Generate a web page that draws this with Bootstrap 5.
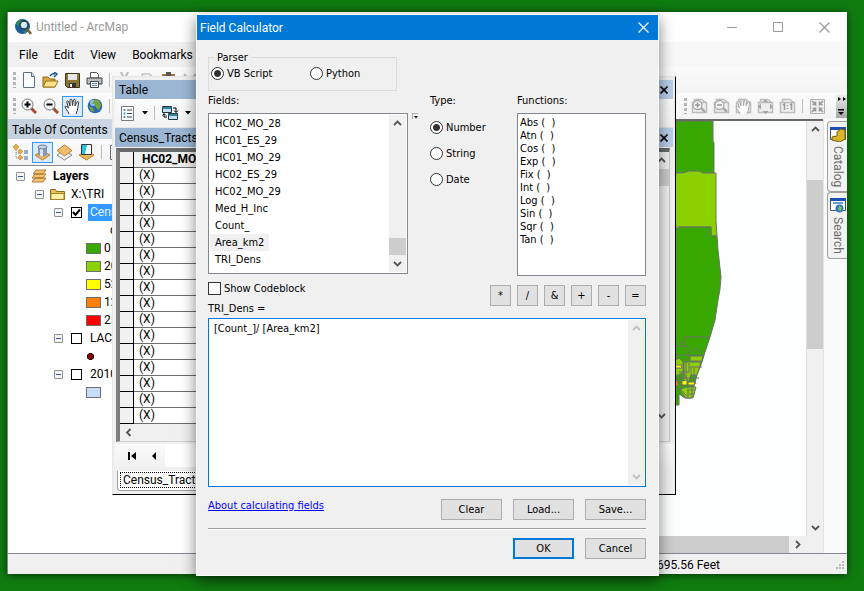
<!DOCTYPE html>
<html lang="en">
<head>
<meta charset="utf-8">
<meta name="viewport" content="width=device-width, initial-scale=1">
<title>Untitled - ArcMap</title>
<link href="https://cdn.jsdelivr.net/npm/bootstrap@5.3.0/dist/css/bootstrap.min.css" rel="stylesheet">
<style>
:root{--face:#f0f0f0;--blue:#0078d7;--caption:#99b4d1}
body{background:#107c10;font:12px/16px Roboto,"Open Sans",sans-serif;color:#000;min-height:100vh;overflow:hidden}
svg{display:block;flex:none}
button{font:inherit;color:inherit}
.win{position:absolute;display:flex;flex-direction:column}
.win-main{inset:12px 17px 17px 7px;background:#fff;border-left:1px solid #7b8a7b;box-shadow:0 1px 8px rgba(0,0,0,.6)}
.plain{background:none;border:0;padding:0;display:flex;align-items:center;justify-content:center}
.titlebar{height:30px;padding:0 0 0 6px;color:#999}
.capbtn{width:46px;height:30px;color:#999}
.menus{height:25px;padding:0 0 0 11px;gap:16px;background:linear-gradient(90deg,#f0f0f0 20%,#f8f8f8 80%)}
.menus a{color:#000;text-decoration:none}
.tools{height:26px;background:#f8f8f8}
.strip{height:26px;gap:1px;padding-left:2px;background:linear-gradient(#fbfbfb,#f3f3f3)}
.tool{width:21px;height:21px;border:1px solid transparent}
.tool.on{border-color:#3399ff;background:#dcebfa}
.grip{width:3px;height:16px;margin:0 1px 0 3px;background:repeating-linear-gradient(#b4b4b4 0 3px,transparent 3px 5px)}
.vsep{width:1px;height:14px;margin:0 3px;background:#bcbcbc}
.more{width:11px;height:24px;background:linear-gradient(#f0f0f0,#a8a8a8);margin-left:7px}
.toc{width:260px;flex:none}
.toc-head{height:20px;padding:3px 4px 1px;background:linear-gradient(90deg,#c3d0de,#d8e2ee)}
.toc-tree{border-top:1px solid #828790;padding:1px 0 0 8px;overflow:hidden}
.trow{height:18px;gap:6px;white-space:nowrap}
.lvl2{padding-left:19px}.lvl3{padding-left:38px}.lvl4{padding-left:70px;gap:3px}
.trow label{padding-left:2px}
.exp{width:9px;height:9px;border:1px solid #919191;border-radius:1px;background:linear-gradient(#3b57a0,#3b57a0) center/5px 1px no-repeat #f4f4f4}
.sw{width:15px;height:11px;border:1px solid #6e6e6e}
.sw0{background:#38a800}.sw1{background:#8bd100}.sw2{background:#ff0}.sw3{background:#ff8000}.sw4{background:#f00}.sw5{background:#c5ddf8}
.tick{appearance:none;width:11px;height:11px;margin:0 0 0 2px;border:1px solid #000;background:#fff}
.tick:checked{background:#fff url("data:image/svg+xml,%3Csvg xmlns='http://www.w3.org/2000/svg' viewBox='0 0 9 9'%3E%3Cpath d='M1 4l2.5 3L8 1.5' fill='none' stroke='%23000' stroke-width='2'/%3E%3C/svg%3E")}
.picked{background:#39f;color:#e6f6ff;height:17px;padding:0 2px}
.mapview{border-top:2px solid #696969;background:#fdfefe}
.sbar{width:17px;background:#f0f0f0;border-left:1px solid #e0e0e0;flex:none;color:#555}
.hbar{height:17px;background:#f0f0f0;flex:none;color:#555}
.knob{background:#cdcdcd}
.mapknob{margin:46px 0 174px}
.tknob,.fknob{height:17px}
.dock{width:24px;background:#fbfbfb;border-left:1px solid #e3e3e3;padding:2px 0 0 3px;flex:none}
.docktab{width:20px;height:71px;padding:4px 0 0;gap:4px;border:1px solid #a0a0a0;border-right:0;border-radius:4px 0 0 4px;background:#f3f3f3;color:#6d6d6d;flex-direction:column;justify-content:flex-start}
.docktab+.docktab{height:67px}
.docktab span{writing-mode:vertical-rl}
.status{height:21px;background:var(--face);border-top:1px solid #828790;padding:2px 2px 0 0}
.coords{margin-right:116px}
.win-table{inset:76px 188px 96px 112px;background:var(--face);border:solid;border-width:1px;border-color:#e8e8e8 #000 #000 #e8e8e8;padding:3px 2px 3px 2px}
.cap{height:19px;padding:0 5px 0 4px;background:var(--caption)}
.tcap{background:linear-gradient(90deg,#99b4d1,#b7cfeb)}
.cap2{height:20px;border-top:1px solid #e4e4e4}
.ttools{height:28px}
.dd{margin:0 5px 0 3px}
.gridbox{margin:1px 3px 0 1px;border:3px solid #696969;border-width:4px 1px 1px 4px;border-color:#696969 #c8c8c8 #d0d0d0 #7c7c7c;background:#fff;overflow:hidden}
.recs{width:100%;table-layout:fixed;border-collapse:separate;border-spacing:0}
.recs th,.recs td{height:16px;padding:0 0 0 5px;border-bottom:1px solid #6e6e6e;line-height:15px;background:#fff}
.recs thead th{background:var(--face);padding-left:8px}
.recs th:first-child{width:14px;padding:0;background:var(--face);border:solid #000;border-width:0 1px 1px 0}
.recnav{height:23px;margin-top:2px;padding-left:6px;background:linear-gradient(#fbfbfb,#f1f1f1)}
.recnav .plain{width:22px;height:20px}
.sheet{align-self:flex-start;margin:4px 0 0 2px;border:1px solid #a0a0a0;border-top:0;border-radius:0 0 3px 3px;background:#fff;padding:1px 2px 2px}
.sheet span{display:block;border:1px dotted #000;padding:0 2px;line-height:14px}
.win-dlg{inset:14px 205px 15px 196px;background:var(--face);border:1px solid #fafafa;box-shadow:0 5px 14px rgba(0,0,0,.5);font:11px/13px "DejaVu Sans Condensed","Noto Sans",sans-serif}
.dlg-title{height:25px;padding:0 9px 0 3px;background:var(--blue);color:#fff;font:12px/16px Roboto,sans-serif}
.dlg-body{padding:11px 12px 16px 11px}
.parser{width:189px;height:40px;border:1px solid #dcdcdc;padding:0 2px;margin:0}
.parser legend{float:none;width:auto;margin:0 0 0 3px;padding:0 3px;font-size:11px;line-height:13px;background:var(--face)}
.parser .d-flex{padding-top:3px}
.opt{display:flex;align-items:center;gap:3px}
.opt input{appearance:none;width:13px;height:13px;margin:0;border:1px solid #333;background:#fff;flex:none}
.opt input[type=radio]{border-radius:50%}
.opt input[type=radio]:checked{background:radial-gradient(circle,#333 0 3px,#fff 4px)}
.vb{width:99px}
.upper{padding-top:3px}
.lab{height:19px;line-height:14px}
.lbox{border:1px solid #828790;background:#fff}
.fieldlist{width:200px;height:161px;padding:1px}
.fieldlist li{height:17px;line-height:17px;padding:0 5px;width:max-content}
.fieldlist li.cur{background:var(--face)}
.funclist{height:163px;padding:2px}
.funclist li{line-height:13px;height:13px}
.mini{width:6px;height:6px;border:1px solid #aaa;border-width:1px 0 0 1px;margin:19px 0 0 4px}
.types{width:87px;margin-left:12px}
.gap-list{gap:13px;padding-top:8px}
.opsrow{height:29px;padding-top:6px}
.ops{gap:6px;padding-top:3px}
.exprlab{height:16px;margin-top:-3px}
.btn-w{border:1px solid #adadad;background:#e1e1e1;height:21px;padding:0}
.wide{width:61px}.op{width:21px;font-size:11px}
.main-btn{border:2px solid var(--blue)}
.expr{height:169px;border:1px solid var(--blue);background:#fff;padding:1px}
.expr textarea{border:0;outline:0;resize:none;background:transparent;padding:2px 4px;font:inherit;line-height:13px;overflow:hidden}
.expr .sbar{width:16px;border:0;color:#c0c0c0}
.actions{gap:11px}
.expr+.actions{padding-top:12px}
.rule{height:2px;margin:8px 0;border-top:1px solid #a0a0a0;background:#fff}
.help{color:#00f}
</style>
</head>
<body>
<svg width="0" height="0" class="position-absolute" aria-hidden="true">
<symbol id="up" viewBox="0 0 9 9"><path d="M1 6l3.500-3.500L8 6" fill="none" stroke="currentColor" stroke-width="1.800"/></symbol>
<symbol id="down" viewBox="0 0 9 9"><path d="M1 3l3.500 3.500L8 3" fill="none" stroke="currentColor" stroke-width="1.800"/></symbol>
<symbol id="left" viewBox="0 0 9 9"><path d="M6.500 1L3 4.500 6.500 8" fill="none" stroke="currentColor" stroke-width="1.800"/></symbol>
<symbol id="right" viewBox="0 0 9 9"><path d="M3 1l3.500 3.500L3 8" fill="none" stroke="currentColor" stroke-width="1.800"/></symbol>
<symbol id="x" viewBox="0 0 11 11"><path d="M.5.5l10 10M10.500.5l-10 10" fill="none" stroke="currentColor" stroke-width="1.200"/></symbol>
<symbol id="xb" viewBox="0 0 8 8"><path d="M.5.5l7 7M7.500.5l-7 7" fill="none" stroke="currentColor" stroke-width="1.700"/></symbol>
<symbol id="hand" viewBox="0 0 17 17"><path d="M5 16C4 13 1 10 1 8.500 2 7.500 3 9 4.500 10L2.800 4C2.700 2.600 4.200 2.500 4.700 4L6 8 6 2.200C6 .8 7.700.8 8 2.200L8.500 7.500 9.500 2C10 .8 11.300 1 11.300 2.400L11 8 13 4C13.800 3 15 3.600 14.600 5 14 7 14 12 12 16" fill="#fff" stroke="currentColor"/></symbol>
<symbol id="page" viewBox="0 0 17 17"><path d="M1.500 4.500h14v10h-14zM11 1.500H3.500v3M11 1.500l3.500 3" fill="#eee" stroke="#bdbdbd" stroke-width="1.500"/></symbol>
</svg>

<main class="win win-main">
  <header class="titlebar d-flex align-items-center">
    <svg width="18" height="18" viewBox="0 0 18 18"><circle cx="8.500" cy="8.500" r="7.500" fill="#1d5c9c"/><path d="M2 5Q5 0 9 2L6 5 4 9zM9 13l4-1-2 4z" fill="#2e8b57"/><circle cx="10" cy="7" r="4" fill="#bfe6f5" stroke="#20343f" stroke-width="1.300"/><path d="M8 5h4M8 7h3" stroke="#fff"/><path d="M13 11l4 5" stroke="#7d5c34" stroke-width="2.500"/></svg>
    <span class="flex-grow-1 ms-1">Untitled - ArcMap</span>
    <button class="plain capbtn" aria-label="Minimize"><svg width="10" height="11"><path d="M0 5.500h10" stroke="currentColor"/></svg></button>
    <button class="plain capbtn" aria-label="Maximize"><svg width="10" height="10"><path d="M.5.5h9v9h-9z" fill="none" stroke="currentColor"/></svg></button>
    <button class="plain capbtn" aria-label="Close"><svg width="11" height="11"><use href="#x"/></svg></button>
  </header>
  <nav class="menus d-flex align-items-center"><a href="#">File</a><a href="#">Edit</a><a href="#">View</a><a href="#">Bookmarks</a></nav>
  <div class="tools">
    <div class="strip d-flex align-items-center">
      <i class="grip"></i>
      <button class="plain tool" aria-label="New"><svg width="14" height="16"><path d="M1.500.5h8l3 4v11h-11z" fill="#fafdff" stroke="#5d6f80"/><path d="M9.500.5v4h3" fill="#c9dcec" stroke="#5d6f80"/></svg></button>
      <button class="plain tool" aria-label="Open"><svg width="17" height="16"><path d="M1 5h5l2 2h5v8H1z" fill="#d9a936" stroke="#8d6a17"/><path d="M4 9h12l-3 6H1z" fill="#ffe28a" stroke="#96721c"/><path d="M8 4q2-3 5-2M12 0l3 2-3 3" stroke="#17549b" fill="none" stroke-width="1.500"/></svg></button>
      <button class="plain tool" aria-label="Save"><svg width="15" height="15"><path d="M.5.5h14v14h-12l-2-2z" fill="#8c7433" stroke="#3f3517"/><path d="M3 1h9v6H3z" fill="#e5e5e5"/><path d="M4 10h7v4H4z" fill="#333"/><path d="M5 11h2v3H5z" fill="#eee"/></svg></button>
      <button class="plain tool" aria-label="Print"><svg width="17" height="16"><path d="M4.500 6V.5h6l2 2V6z" fill="#fff" stroke="#555"/><path d="M1 6h15v6H1z" fill="#b8bec2" stroke="#444"/><path d="M4.500 9.500h8v6h-8z" fill="#fff" stroke="#444"/><path d="M6 11.500h5M6 13.500h5" stroke="#5084b4"/></svg></button>
      <i class="vsep"></i>
      <button class="plain tool" aria-label="Cut"><svg width="15" height="16"><path d="M4 0l5 10M11 0L6 10" stroke="#bbb" stroke-width="2"/></svg></button>
      <button class="plain tool" aria-label="Copy"><svg width="16" height="17"><use href="#page"/></svg></button>
      <button class="plain tool" aria-label="Paste"><svg width="15" height="17"><path d="M1 2h13v14H1z" fill="#a9713f"/><path d="M5 0h5v4H5z" fill="#555"/></svg></button>
      <button class="plain tool" aria-label="Delete"><svg width="15" height="16"><path d="M1 2l12 12M13 2L1 14" stroke="#bbb" stroke-width="2"/></svg></button>
    </div>
  </div>
  <div class="tools d-flex align-items-center justify-content-between">
    <div class="strip d-flex align-items-center">
      <i class="grip"></i>
      <button class="plain tool" aria-label="Zoom In"><svg width="16" height="16"><path d="M10 10l5 5" stroke="#a34b33" stroke-width="3"/><circle cx="6.500" cy="6.500" r="5.500" fill="#f3f6f8" stroke="#777"/><path d="M3.500 6.500h6M6.500 3.500v6" stroke="#000" stroke-width="2"/></svg></button>
      <button class="plain tool" aria-label="Zoom Out"><svg width="16" height="16"><path d="M10 10l5 5" stroke="#a34b33" stroke-width="3"/><circle cx="6.500" cy="6.500" r="5.500" fill="#f3f6f8" stroke="#777"/><path d="M3.500 6.500h6" stroke="#000" stroke-width="2"/></svg></button>
      <button class="plain tool on" aria-label="Pan"><svg width="17" height="17" color="#333"><use href="#hand"/></svg></button>
      <button class="plain tool" aria-label="Full Extent"><svg width="16" height="16"><circle cx="8" cy="8" r="7.300" fill="#2f67ae"/><circle cx="6" cy="5" r="3" fill="#8cc3ee"/><path d="M8 1q5 1 6 6l-2 5-3-2-1-4-3 0zM2 8l4 2 1 4-3-1z" fill="#78a83c"/></svg></button>
      <i class="vsep"></i>
    </div>
    <div class="strip d-flex align-items-center">
      <i class="grip"></i>
      <button class="plain tool" aria-label="Layout Zoom In"><svg width="17" height="17"><use href="#page"/><path d="M9 9l5 5" stroke="#aaa" stroke-width="2.500"/><circle cx="6.500" cy="7" r="4.500" fill="#f4f4f4" stroke="#aaa" stroke-width="1.300"/><path d="M4 7h5M6.500 4.500v5" stroke="#999" stroke-width="1.500"/></svg></button>
      <button class="plain tool" aria-label="Layout Zoom Out"><svg width="17" height="17"><use href="#page"/><path d="M9 9l5 5" stroke="#aaa" stroke-width="2.500"/><circle cx="6.500" cy="7" r="4.500" fill="#f4f4f4" stroke="#aaa" stroke-width="1.300"/><path d="M4 7h5" stroke="#999" stroke-width="1.500"/></svg></button>
      <button class="plain tool" aria-label="Layout Pan"><svg width="17" height="17" color="#aaa"><use href="#page"/><use href="#hand"/></svg></button>
      <button class="plain tool" aria-label="Whole Page"><svg width="17" height="17"><use href="#page"/><path d="M8.500 1l3 3h-6zM8.500 16l3-3h-6zM1 8.500l3-3v6zM16 8.500l-3-3v6z" fill="#a5a5a5"/></svg></button>
      <button class="plain tool" aria-label="Actual Size"><svg width="17" height="17"><use href="#page"/><path d="M4 7l1.500-1v6M11 7l1.500-1v6M8.500 7v1M8.500 10v1" fill="none" stroke="#999" stroke-width="1.500"/></svg></button>
      <i class="vsep"></i>
      <button class="plain tool" aria-label="Fixed Zoom In"><svg width="17" height="17"><path d="M1.500 1.500h14v14h-14z" fill="#eee" stroke="#b0b0b0"/><path d="M3 3l3.500 3.500V3.500M6.500 6.500h-3M14 3l-3.500 3.500V3.500M10.500 6.500h3M3 14l3.500-3.500v3M6.500 10.500h-3M14 14l-3.500-3.500v3M10.500 10.500h3" fill="none" stroke="#999" stroke-width="1.500"/></svg></button>
      <button class="plain more" aria-label="More tools"><svg width="9" height="18"><path d="M1 0l3 2-3 2zM6 0l3 2-3 2zM1 12h6v1.500H1zM1 15h6l-3 3z"/></svg></button>
    </div>
  </div>
  <div class="d-flex flex-grow-1">
    <section class="toc d-flex flex-column">
      <div class="toc-head">Table Of Contents</div>
      <div class="strip d-flex align-items-center">
        <button class="plain tool" aria-label="List by drawing order"><svg width="17" height="17"><path d="M4 6v8h4M4 9h4" fill="none" stroke="#888" stroke-dasharray="1 1"/><path d="M4 0l3 3-3 3-3-3zM8 5l3 2.500-3 2.500-2-2.500zM8 11l3 2.500L8 16l-2-2.500z" fill="#e7ae4e" stroke="#b87a1c" stroke-width=".6"/><path d="M12 7h4M12 9h4M12 13h4M12 15h4" stroke="#356a99"/></svg></button>
        <button class="plain tool on" aria-label="List by source"><svg width="17" height="17"><path d="M1 11l7.500-4 7.500 4-7.500 5z" fill="#edb65b" stroke="#b9822e"/><path d="M4 3v8q4.500 3 9 0V3z" fill="#8498b5"/><path d="M6 4v8l3 .5V4z" fill="#dbe4ef"/><ellipse cx="8.500" cy="3" rx="4.500" ry="2" fill="#c4d0df" stroke="#6c7f9c"/></svg></button>
        <button class="plain tool" aria-label="List by visibility"><svg width="17" height="17"><path d="M1 11l7.500-5 7.500 5-7.500 5z" fill="#eee" stroke="#888"/><path d="M1 6.500L8.500 1 16 6.500 8.500 12z" fill="#efbd6d" stroke="#b9822e"/></svg></button>
        <button class="plain tool" aria-label="List by selection"><svg width="17" height="17"><path d="M1 11l7.500-4 7.500 4-7.500 5z" fill="#edb65b" stroke="#b9822e"/><path d="M3.500.5h10v10h-10z" fill="#fff" stroke="#333"/><path d="M4 1h5L7 10H4z" fill="#29c5de"/></svg></button>
        <i class="vsep"></i>
        <button class="plain ms-1" aria-label="Options"><svg width="14" height="15"><path d="M.5.5h13v14H.5z" fill="#fff" stroke="#667"/><path d="M3 4h2M3 7h2M3 11h2" stroke="#345"/></svg></button>
      </div>
      <div class="toc-tree flex-grow-1">
        <div class="trow d-flex align-items-center"><i class="exp"></i><svg width="16" height="14"><path d="M4 9h11l-3 4H1zM4 5h11l-3 4H1zM5 1h10l-3 4H2z" fill="#f2c277" stroke="#a06a1c" stroke-width=".8"/></svg><b>Layers</b></div>
        <div class="trow lvl2 d-flex align-items-center"><i class="exp"></i><svg width="15" height="13"><path d="M.5 11.500V1.500h5l1 2h8v8z" fill="#e8c14f" stroke="#8c6d1d"/><path d="M1 5.500h13v6H1z" fill="#fdf0a8" stroke="#a5842b"/></svg><span>X:\TRI</span></div>
        <div class="trow lvl3 d-flex align-items-center"><i class="exp"></i><input class="tick" type="checkbox" checked aria-label="Census tracts"><span class="picked">Cens</span></div>
        <div class="trow lvl4 d-flex align-items-center"><span class="ps-4">c</span></div>
        <div class="trow lvl4 d-flex align-items-center"><i class="sw sw0"></i><span>0</span></div>
        <div class="trow lvl4 d-flex align-items-center"><i class="sw sw1"></i><span>20</span></div>
        <div class="trow lvl4 d-flex align-items-center"><i class="sw sw2"></i><span>52</span></div>
        <div class="trow lvl4 d-flex align-items-center"><i class="sw sw3"></i><span>12</span></div>
        <div class="trow lvl4 d-flex align-items-center"><i class="sw sw4"></i><span>25</span></div>
        <div class="trow lvl3 d-flex align-items-center"><i class="exp"></i><input class="tick" type="checkbox" id="lac"><label for="lac">LAC</label></div>
        <div class="trow lvl4 d-flex align-items-center"><svg width="9" height="7"><path d="M3 .5h3l1.500 1.500v3L6 6.500H3L1.500 5V2z" fill="#8b0000" stroke="#000"/></svg></div>
        <div class="trow lvl3 d-flex align-items-center"><i class="exp"></i><input class="tick" type="checkbox" id="y2010"><label for="y2010">2010</label></div>
        <div class="trow lvl4 d-flex align-items-center"><i class="sw sw5"></i></div>
      </div>
    </section>
    <section class="mapview d-flex flex-column flex-grow-1">
      <div class="d-flex flex-grow-1">
        <div class="flex-grow-1 d-flex justify-content-end">
          <svg width="131" height="290" viewBox="676 121 131 290">
            <g stroke="#6e6e6e">
            <path d="M670 121h44v20l1 2v30l-45 1z" fill="#38a800"/>
            <path d="M670 173h14l6-2h10l4 2h13v48l1 15h-6v-9h-42z" fill="#8bd100"/>
            <path d="M670 228h10v-1h32v9h6l1 14 2 18 1 9-1 12-2 11-3 20-5 17-5 15-3 10-5 13-3 11-2 9-1 3h-6l-6-4v11h-10z" fill="#38a800"/>
            <path d="M691 356h13l-1 5h-12zM676 360l4-2 4 4v11l-8 3zM685 362h17l-4 13h-6l-2 6h-5zM680 389l9-2h8l-3 11h-7z" fill="#8bd100"/>
            <path d="M676 365l6 0 1 3h-7zM683 381l5-1v5h-5zM689 382h7l-1 3h-6z" fill="#ff0"/>
            <path d="M674 381h5v5h-5z" fill="#ff8000"/>
            <path d="M685 337h26M685 337v6h-4v4M678 346h11v9M676 355h27M692 352l4-4 6 4M687 358v20M680 372h10v-9M690 367h13M692 368v10h8M695 368v8M676 378h18l3 6M682 376v14M689 386v12M693 386v12M680 388l8 8M690 390h5M690 394h5M684 373l5 8" fill="none"/>
            </g>
          </svg>
        </div>
        <div class="sbar d-flex flex-column align-items-center justify-content-between py-1">
          <svg width="9" height="9"><use href="#up"/></svg><div class="knob w-100 flex-grow-1 mapknob"></div><svg width="9" height="9"><use href="#down"/></svg>
        </div>
      </div>
      <div class="hbar d-flex align-items-center"><div class="knob flex-grow-1 h-100"></div><svg class="mx-1" width="9" height="9"><use href="#right"/></svg><div class="sbar"></div></div>
    </section>
    <aside class="dock">
      <button class="plain docktab"><svg width="16" height="16"><path d="M.5 1.500h15v12H.5z" fill="#fff" stroke="#456"/><path d="M0 1h16v3H0z" fill="#1b4fb0"/><path d="M7 6l4-3 4 1v9l-5 3-8-2v-3l5-1z" fill="#d8b62c" stroke="#7a5c10"/></svg><span>Catalog</span></button>
      <button class="plain docktab"><svg width="16" height="16"><path d="M.5 1.500h15v12H.5z" fill="#fff" stroke="#456"/><path d="M0 1h16v3H0z" fill="#1b4fb0"/><path d="M3 6h10" stroke="#6d9ad0" stroke-width="2"/><circle cx="9.500" cy="11.500" r="4" fill="#2f78bd"/><path d="M9 9l3 1-1 4-3-1z" fill="#7fc06a"/></svg><span>Search</span></button>
    </aside>
  </div>
  <footer class="status d-flex align-items-center justify-content-end">
    <span class="coords">0695.56 Feet</span>
    <svg width="9" height="9"><path d="M6 0h2v2H6zM3 3h2v2H3zM6 3h2v2H6zM0 6h2v2H0zM3 6h2v2H3zM6 6h2v2H6z" fill="#bbb"/></svg>
  </footer>
</main>

<section class="win win-table">
  <div class="cap tcap d-flex align-items-center justify-content-between"><span>Table</span><button class="plain" aria-label="Close table"><svg width="8" height="8"><use href="#xb"/></svg></button></div>
  <div class="strip ttools d-flex align-items-center">
    <button class="plain tool" aria-label="Table options"><svg width="13" height="15"><path d="M.5.5h12v14H.5z" fill="#fff" stroke="#778"/><path d="M6 4h5M6 7.500h5M6 11h5" stroke="#345"/><path d="M2.500 3h2v2h-2zM2.500 6.500h2v2h-2zM2.500 10h2v2h-2z" fill="#49c"/></svg></button>
    <svg class="dd" width="6" height="4"><path d="M0 0h6L3 3.500z"/></svg>
    <i class="vsep mx-0"></i>
    <button class="plain tool ms-1" aria-label="Related tables"><svg width="17" height="16"><path d="M.5 1.500h9v6h-9zM6.500 8.500h9v6h-9z" fill="#bfe3f0" stroke="#234"/><path d="M0 3h10M6 10h10" stroke="#167" stroke-width="1.500"/><path d="M11 3h3v4M12 5.500l2 2 2-2M5 12H2V9M.5 10.500l1.500-2 2 2" fill="none" stroke="#000"/></svg></button>
    <svg class="dd" width="6" height="4"><path d="M0 0h6L3 3.500z"/></svg>
    <i class="vsep mx-0"></i>
  </div>
  <div class="cap cap2 tcap d-flex align-items-center justify-content-between"><span>Census_Tracts-</span><button class="plain" aria-label="Close tab"><svg width="8" height="8"><use href="#xb"/></svg></button></div>
  <div class="gridbox flex-grow-1 d-flex flex-column">
    <div class="d-flex flex-grow-1">
      <table class="recs align-self-start">
        <thead><tr><th></th><th>HC02_MO_</th></tr></thead>
        <tbody>
          <tr><th></th><td>(X)</td></tr><tr><th></th><td>(X)</td></tr><tr><th></th><td>(X)</td></tr><tr><th></th><td>(X)</td></tr>
          <tr><th></th><td>(X)</td></tr><tr><th></th><td>(X)</td></tr><tr><th></th><td>(X)</td></tr><tr><th></th><td>(X)</td></tr>
          <tr><th></th><td>(X)</td></tr><tr><th></th><td>(X)</td></tr><tr><th></th><td>(X)</td></tr><tr><th></th><td>(X)</td></tr>
          <tr><th></th><td>(X)</td></tr><tr><th></th><td>(X)</td></tr><tr><th></th><td>(X)</td></tr><tr><th></th><td>(X)</td></tr>
        </tbody>
      </table>
      <div class="sbar d-flex flex-column align-items-center pt-1"><svg width="9" height="9"><use href="#up"/></svg><div class="knob w-100 mt-1 tknob"></div><svg class="mt-auto mb-1" width="9" height="9"><use href="#down"/></svg></div>
    </div>
    <div class="hbar d-flex align-items-center ps-1"><svg width="9" height="9"><use href="#left"/></svg></div>
  </div>
  <div class="recnav d-flex align-items-center">
    <button class="plain" aria-label="First record"><svg width="9" height="8"><path d="M0 0h2v8H0zM8 0v8L3 4z"/></svg></button>
    <button class="plain" aria-label="Previous record"><svg width="5" height="8"><path d="M4 0v8L0 4z"/></svg></button>
    <input class="border-0 h-100 p-0" aria-label="Record number">
  </div>
  <button class="plain sheet"><span>Census_Tracts</span></button>
</section>

<section class="win win-dlg" role="dialog" aria-labelledby="dlgt">
  <header class="dlg-title d-flex align-items-center justify-content-between"><span id="dlgt">Field Calculator</span><button class="plain" aria-label="Close"><svg width="11" height="11"><use href="#x"/></svg></button></header>
  <div class="dlg-body d-flex flex-column flex-grow-1">
    <fieldset class="parser"><legend>Parser</legend>
      <div class="d-flex"><label class="opt vb"><input type="radio" name="parser" checked>VB Script</label><label class="opt"><input type="radio" name="parser">Python</label></div>
    </fieldset>
    <div class="d-flex upper">
      <div><div class="lab">Fields:</div>
        <div class="lbox fieldlist d-flex justify-content-between">
          <ul class="list-unstyled m-0"><li>HC02_MO_28</li><li>HC01_ES_29</li><li>HC01_MO_29</li><li>HC02_ES_29</li><li>HC02_MO_29</li><li>Med_H_Inc</li><li>Count_</li><li class="cur">Area_km2</li><li>TRI_Dens</li></ul>
          <div class="sbar border-0 d-flex flex-column align-items-center py-1"><svg width="9" height="9"><use href="#up"/></svg><div class="knob w-100 mt-auto mb-1 fknob"></div><svg width="9" height="9"><use href="#down"/></svg></div>
        </div>
      </div>
      <div class="mini"><svg width="5" height="5"><path d="M1 2h4L3 4.500z"/></svg></div>
      <div class="types"><div class="lab">Type:</div>
        <div class="d-flex flex-column gap-list"><label class="opt"><input type="radio" name="type" checked>Number</label><label class="opt"><input type="radio" name="type">String</label><label class="opt"><input type="radio" name="type">Date</label></div>
      </div>
      <div class="flex-grow-1"><div class="lab">Functions:</div>
        <ul class="lbox funclist list-unstyled m-0"><li>Abs (&nbsp; )</li><li>Atn (&nbsp; )</li><li>Cos (&nbsp; )</li><li>Exp (&nbsp; )</li><li>Fix (&nbsp; )</li><li>Int (&nbsp; )</li><li>Log (&nbsp; )</li><li>Sin (&nbsp; )</li><li>Sqr (&nbsp; )</li><li>Tan (&nbsp; )</li></ul>
      </div>
    </div>
    <div class="d-flex justify-content-between opsrow">
      <label class="opt align-self-start"><input type="checkbox">Show Codeblock</label>
      <div class="d-flex ops"><button class="btn-w op">*</button><button class="btn-w op">/</button><button class="btn-w op">&amp;</button><button class="btn-w op">+</button><button class="btn-w op">-</button><button class="btn-w op">=</button></div>
    </div>
    <label class="exprlab" for="ex">TRI_Dens =</label>
    <div class="expr d-flex"><textarea id="ex" class="flex-grow-1" spellcheck="false">[Count_]/ [Area_km2]</textarea><div class="sbar d-flex flex-column align-items-center justify-content-between py-1"><svg width="9" height="9"><use href="#up"/></svg><svg width="9" height="9"><use href="#down"/></svg></div></div>
    <div class="d-flex actions"><a class="help me-auto" href="#">About calculating fields</a><button class="btn-w wide">Clear</button><button class="btn-w wide">Load...</button><button class="btn-w wide">Save...</button></div>
    <div class="rule"></div>
    <div class="d-flex actions justify-content-end"><button class="btn-w wide main-btn">OK</button><button class="btn-w wide">Cancel</button></div>
  </div>
</section>
</body>
</html>
